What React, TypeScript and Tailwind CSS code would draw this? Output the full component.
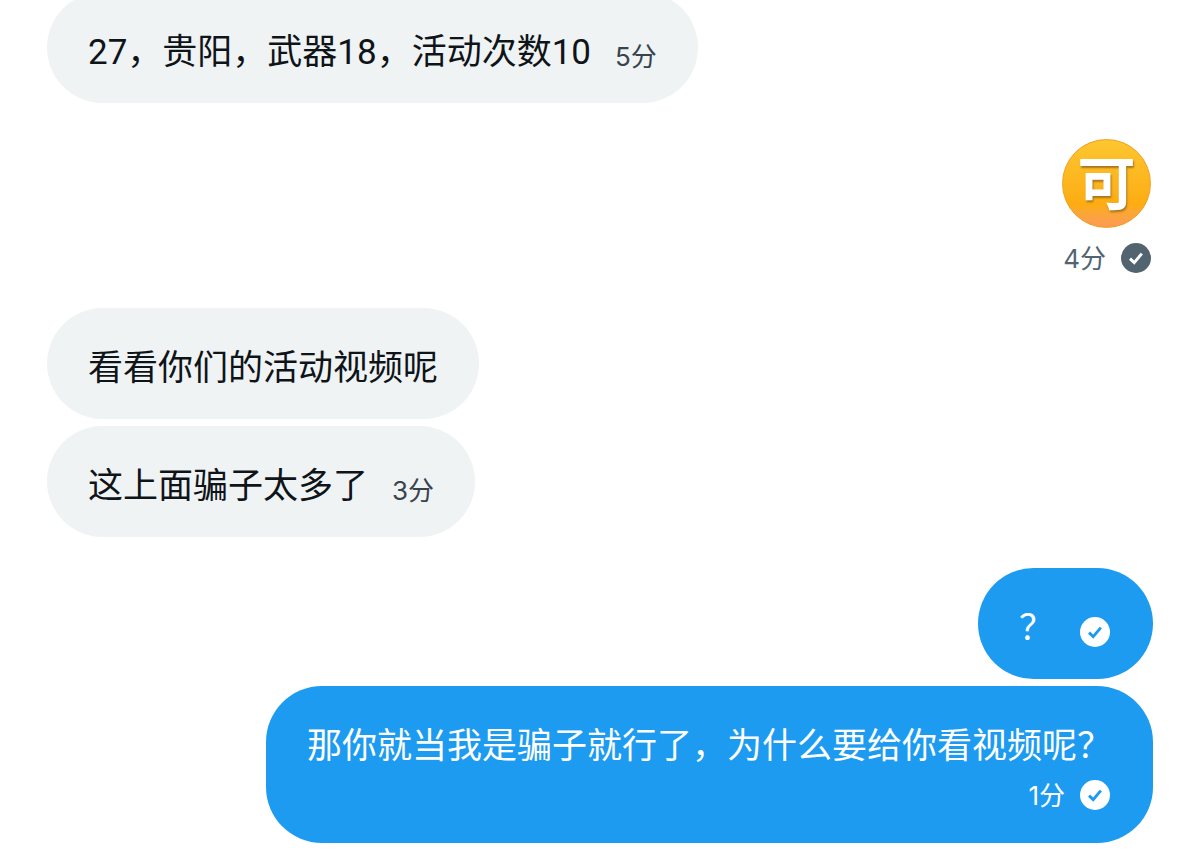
import React from 'react';
import clsx from 'clsx';

type Message = {
  id: number;
  text: string;
  time?: string;
  mine?: boolean;
  seen?: boolean;
  emoji?: boolean;
  stacked?: boolean;
};

// messages are grouped by sender, each group has its own spacing
const groups: Message[][] = [
  [{ id: 1, text: '27，贵阳，武器18，活动次数10', time: '5分' }],
  [{ id: 2, text: '可', time: '4分', mine: true, seen: true, emoji: true }],
  [
    { id: 3, text: '看看你们的活动视频呢' },
    { id: 4, text: '这上面骗子太多了', time: '3分' },
  ],
  [
    { id: 5, text: '？', mine: true, seen: true },
    {
      id: 6,
      text: '那你就当我是骗子就行了，为什么要给你看视频呢？',
      time: '1分',
      mine: true,
      seen: true,
      stacked: true,
    },
  ],
];

const groupSpacing = ['', 'mt-9', 'mt-[35px]', 'mt-[31px]'];

const SeenIcon = ({ circle, tick }: { circle: string; tick: string }) => (
  <svg className="size-[30px] shrink-0" viewBox="0 0 30 30" fill="none" role="img" aria-label="已读">
    <circle cx="15" cy="15" r="15" className={circle} />
    <path d="M9 15.6l4.2 4L20.8 10.6" className={tick} strokeWidth="2.9" />
  </svg>
);

const Meta = ({ message }: { message: Message }) => {
  const onWhite = message.emoji;
  return (
    <div
      className={clsx(
        'flex h-[30px] items-center gap-[15px] text-[26px] leading-[30px] whitespace-nowrap',
        onWhite ? 'text-[#536471]' : message.mine ? 'text-white' : 'text-[#38444d]'
      )}
    >
      {message.time && <time className="pt-0.5">{message.time}</time>}
      {message.seen && (
        <SeenIcon
          circle={onWhite ? 'fill-[#536471]' : 'fill-white'}
          tick={onWhite ? 'stroke-white' : 'stroke-[#1d9bf0]'}
        />
      )}
    </div>
  );
};

const EmojiMessage = ({ message }: { message: Message }) => (
  <div className="mr-0.5 flex flex-col items-end gap-[15px]">
    <div className="flex size-[89px] items-center justify-center rounded-full border border-[#f0a020] bg-linear-to-b from-[#fdc62f] via-[#fcac10] via-75% to-[#fb9a55]">
      <span className="text-[58px] leading-[60px] font-bold text-white [text-shadow:1px_2px_2px_#a8771c]">
        {message.text}
      </span>
    </div>
    <Meta message={message} />
  </div>
);

const Bubble = ({ message }: { message: Message }) => (
  <div
    className={clsx(
      'flex max-w-full rounded-[56px] px-[41px] pt-[37px]',
      message.mine ? 'bg-[#1d9bf0] text-white' : 'bg-[#eff3f4] text-[#0f1419]',
      message.stacked ? 'flex-col items-end gap-2.5 pb-[33px]' : 'items-end gap-6 pb-[27px]'
    )}
  >
    <p className="font-[Roboto,'Noto_Sans_CJK_SC',sans-serif] text-[35px] leading-[47px]">{message.text}</p>
    {(message.time || message.seen) && (
      <div className={clsx(!message.stacked && 'mb-[5px]', message.seen && 'mr-0.5', !message.time && 'ml-0.5')}>
        <Meta message={message} />
      </div>
    )}
  </div>
);

const App = () => {
  return (
    <main
      lang="zh-CN"
      className="-mt-2 bg-white px-[47px] pb-2 font-[Inter,'Noto_Sans_CJK_SC',sans-serif]"
    >
      {groups.map((group, index) => (
        <section
          key={group[0].id}
          className={clsx(
            'flex flex-col gap-[7px]',
            group[0].mine ? 'items-end' : 'items-start',
            groupSpacing[index]
          )}
        >
          {group.map((message) =>
            message.emoji ? (
              <EmojiMessage key={message.id} message={message} />
            ) : (
              <Bubble key={message.id} message={message} />
            )
          )}
        </section>
      ))}
    </main>
  );
};

export default App;
